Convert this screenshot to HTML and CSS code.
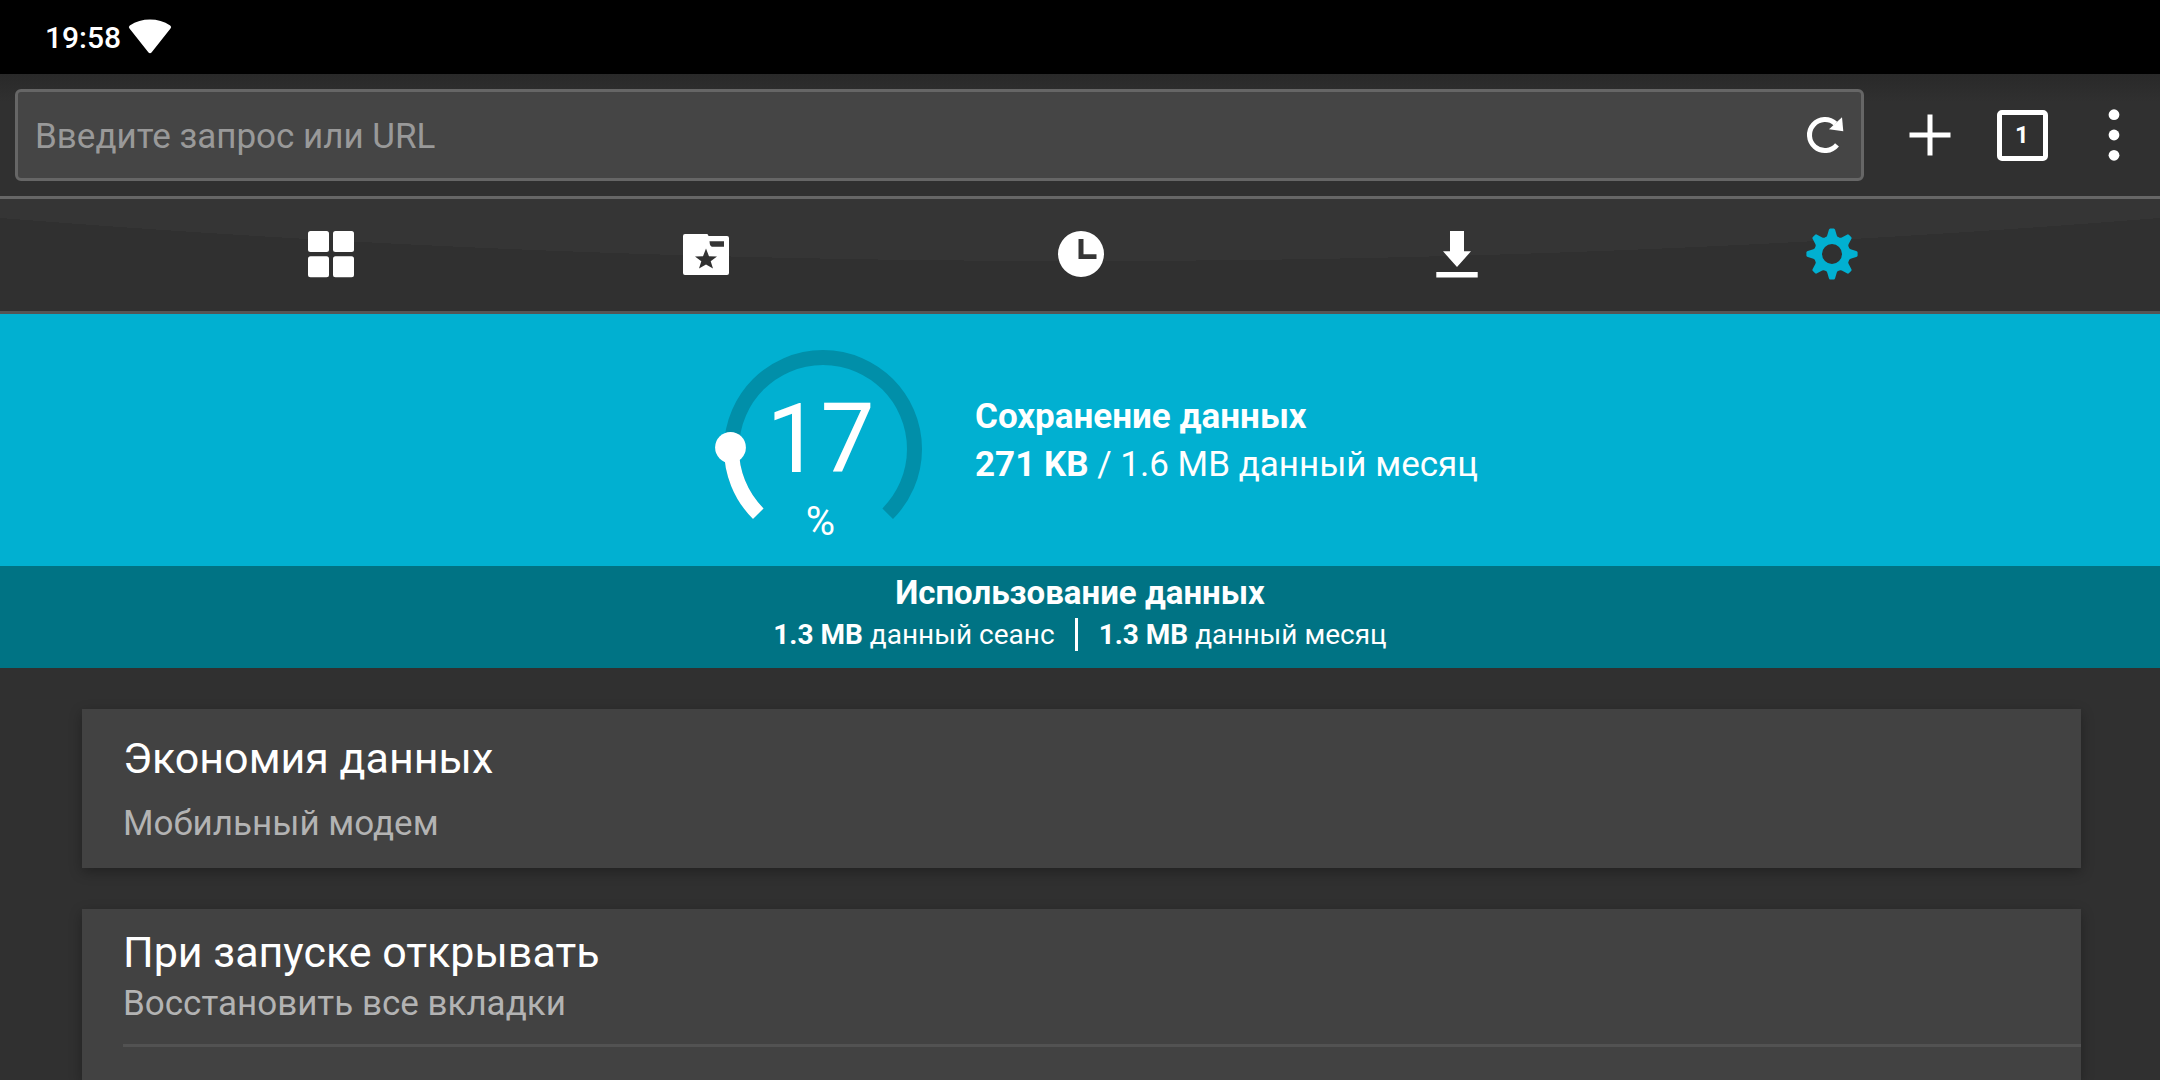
FILE: index.html
```
<!DOCTYPE html>
<html lang="ru">

<head>
    <meta charset="UTF-8">
    <title>Настройки</title>
    <link rel="stylesheet" href="styles.css">
</head>

<body>

    <div class="statusbar">
        <span>19:58</span>
        <svg width="44" height="36" viewBox="0 0 44 36" fill="#fff" aria-hidden="true">
            <path d="M1.5 9.5Q0 8 1.8 6.4Q11 0.500 22 0.500T42.200 6.400Q44 8 42.500 9.500L23.500 33.500Q22 35 20.500 33.500Z" />
        </svg>
    </div>

    <header class="toolbar">
        <form class="address">
            <input type="text" placeholder="Введите запрос или URL" aria-label="Введите запрос или URL">
            <button type="button" aria-label="Обновить">
                <svg width="44" height="44" viewBox="-22 -22 44 44" aria-hidden="true">
                    <path d="M10.500 -11.400A15.500 15.500 0 1 0 12 9.800" fill="none" stroke="#fff" stroke-width="5" />
                    <path d="M17 -17.700L18.300 -3.700L4 -5.700Z" fill="#fff" />
                </svg>
            </button>
        </form>
        <div class="actions">
            <button type="button" aria-label="Новая вкладка">
                <svg width="42" height="42" viewBox="-21 -21 42 42" aria-hidden="true">
                    <path d="M-20.500 0H20.500M0 -20.500V20.500" stroke="#fff" stroke-width="5" />
                </svg>
            </button>
            <button type="button" aria-label="Вкладки"><span class="tab-count">1</span></button>
            <button type="button" aria-label="Меню">
                <svg width="12" height="52" viewBox="-6 -26 12 52" fill="#fff" aria-hidden="true">
                    <circle cy="-20.300" r="5.400" />
                    <circle r="5.400" />
                    <circle cy="20.300" r="5.400" />
                </svg>
            </button>
        </div>
    </header>

    <nav class="tabs">
        <a href="#speed-dial" aria-label="Экспресс-панель">
            <svg width="56" height="56" viewBox="-28 -27 56 56" fill="currentColor" aria-hidden="true">
                <rect x="-23" y="-23" width="21" height="21" rx="2.500" />
                <rect x="2" y="-23" width="21" height="21" rx="2.500" />
                <rect x="-23" y="2.300" width="21" height="21" rx="2.500" />
                <rect x="2" y="2.300" width="21" height="21" rx="2.500" />
            </svg>
        </a>
        <a href="#bookmarks" aria-label="Закладки">
            <svg width="56" height="56" viewBox="-28 -27 56 56" fill="currentColor" aria-hidden="true">
                <path fill-rule="evenodd" d="M-21 -20H1Q2 -20 2.500 -18H21Q23 -18 23 -16V19Q23 21 21 21H-21Q-23 21 -23 19V-18Q-23 -20 -21 -20ZM3.500 -12.700Q3.800 -7.300 6 -7.300H18V-12.700ZM0 -5.500L-3 2.300L-11 2.600L-4.700 7.300L-7 14.600L0 10.500L7 14.600L4.700 7.300L11 2.600L3 2.300Z" />
            </svg>
        </a>
        <a href="#history" aria-label="История">
            <svg width="56" height="56" viewBox="-28 -27 56 56" fill="currentColor" aria-hidden="true">
                <path fill-rule="evenodd" d="M0 -23A23 23 0 1 1 0 23A23 23 0 1 1 0 -23ZM-2.500 -15V5H15.500V0.200H2.500V-15Z" />
            </svg>
        </a>
        <a href="#downloads" aria-label="Загрузки">
            <svg width="56" height="56" viewBox="-28 -27 56 56" fill="currentColor" aria-hidden="true">
                <path d="M-7 -23H7V-2.700H14L0 13L-14 -2.700H-7ZM-20.700 18H20.700V23.500H-20.700Z" />
            </svg>
        </a>
        <a class="active" href="#settings" aria-label="Настройки">
            <svg width="56" height="56" viewBox="-28 -27 56 56" fill="currentColor" aria-hidden="true">
                <defs>
                    <path id="tooth" d="M-1.800 -25.600H1.800Q2.800 -25.400 3.100 -24.200L4.800 -18.600Q5.500 -16.800 7.200 -16.600L4.300 -10.400H-4.300L-7.200 -16.600Q-5.500 -16.800 -4.800 -18.600L-3.100 -24.200Q-2.800 -25.400 -1.800 -25.600Z" />
                </defs>
                <circle r="13.700" fill="none" stroke="currentColor" stroke-width="7.400" />
                <use href="#tooth" />
                <use href="#tooth" transform="rotate(45)" />
                <use href="#tooth" transform="rotate(90)" />
                <use href="#tooth" transform="rotate(135)" />
                <use href="#tooth" transform="rotate(180)" />
                <use href="#tooth" transform="rotate(225)" />
                <use href="#tooth" transform="rotate(270)" />
                <use href="#tooth" transform="rotate(315)" />
            </svg>
        </a>
    </nav>

    <section class="savings">
        <div class="gauge">
            <svg width="216" height="200" viewBox="-108 -109 216 200" fill="none" stroke-width="15" aria-hidden="true">
                <path d="M-64.700 64.700A91.500 91.500 0 1 1 64.700 64.700" stroke="#018fa9" />
                <path d="M-64.700 64.700A91.500 91.500 0 0 1 -91.500 -2" stroke="#fff" />
                <circle cx="-92.500" cy="-1.500" r="15.400" fill="#fff" />
            </svg>
            <div class="gauge-label">
                <span class="gauge-value">17</span>
                <span class="gauge-unit">%</span>
            </div>
        </div>
        <div class="savings-text">
            <strong>Сохранение данных</strong>
            <div><strong>271 KB</strong> / 1.6 MB данный месяц</div>
        </div>
    </section>

    <section class="usage">
        <strong class="usage-title">Использование данных</strong>
        <div class="usage-row">
            <span><strong>1.3 MB</strong> данный сеанс</span>
            <span><strong>1.3 MB</strong> данный месяц</span>
        </div>
    </section>

    <main>
        <a class="card card-single" href="#data-saving">
            <span class="title">Экономия данных</span>
            <span class="subtitle">Мобильный модем</span>
        </a>
        <div class="card card-list">
            <a class="row" href="#startup">
                <span class="title">При запуске открывать</span>
                <span class="subtitle">Восстановить все вкладки</span>
            </a>
        </div>
    </main>

</body>

</html>
```
FILE: styles.css
```
* {
    box-sizing: border-box;
}

body {
    margin: 0;
    min-height: 100vh;
    display: flex;
    flex-direction: column;
    background-color: #303030;
    color: #fff;
    font-family: Roboto, "Noto Sans", sans-serif;
}

a {
    color: inherit;
    text-decoration: none;
}

button {
    display: flex;
    align-items: center;
    justify-content: center;
    padding: 0;
    border: none;
    background: none;
    color: inherit;
    font-family: inherit;
}

strong {
    font-weight: bold;
}

.statusbar {
    display: flex;
    align-items: center;
    gap: 7px;
    height: 74px;
    padding-left: 45px;
    background-color: #000;
    font-size: 30px;
    font-weight: 500;
}

/* Toolbar */
.toolbar {
    display: flex;
    gap: 20px;
    padding: 15px 0 15px 15px;
    border-bottom: 3px solid #666;
    background: linear-gradient(#292929, #303030 28px);
}

.address {
    flex: 1;
    display: flex;
    height: 92px;
    border: 3px solid #666;
    border-radius: 6px;
    background-color: #454545;
}

.address input {
    flex: 1;
    padding: 2px 17px 0;
    border: none;
    outline: none;
    background: none;
    color: #fff;
    font-family: inherit;
    font-size: 35px;
}

.address input::placeholder {
    color: #999;
}

.address button {
    width: 72px;
}

.actions {
    display: flex;
}

.actions button {
    width: 92px;
}

.tab-count {
    width: 51px;
    height: 51px;
    border: 5px solid #fff;
    border-radius: 5px;
    font-size: 24px;
    font-weight: bold;
    line-height: 41px;
}

/* Tabs */
.tabs {
    display: grid;
    grid-template-columns: repeat(5, 1fr);
    padding: 0 140px 0 143px;
    border-bottom: 3px solid #555;
    background: radial-gradient(circle 13560px at 50% -13498px, #353535 100%, #303030 100%);
}

.tabs a {
    display: flex;
    justify-content: center;
    padding: 28px 0;
}

.tabs .active {
    color: #01b0d1;
}

/* Data savings */
.savings {
    display: grid;
    grid-template-columns: 45% 1fr;
    align-items: center;
    padding: 26px 0;
    background-color: #01b0d1;
}

.gauge {
    display: grid;
    justify-self: end;
    margin-right: 41px;
}

.gauge svg,
.gauge-label {
    grid-area: 1 / 1;
}

.gauge-label {
    display: flex;
    flex-direction: column;
    align-items: center;
    padding: 51px 5px 0 0;
}

.gauge-value {
    font-size: 96px;
    line-height: 96px;
}

.gauge-unit {
    margin-bottom: -17px;
    font-size: 40px;
    line-height: 70px;
}

.savings-text {
    padding: 2px 0 0 3px;
    font-size: 35px;
    line-height: 48px;
}

.usage {
    display: flex;
    flex-direction: column;
    align-items: center;
    padding: 6px 0 13px;
    background-color: #007384;
}

.usage-title {
    font-size: 33px;
    line-height: 42px;
}

.usage-row {
    display: flex;
    padding-top: 1px;
    font-size: 28px;
    line-height: 40px;
}

.usage-row span + span {
    position: relative;
    padding-left: 44px;
}

.usage-row span + span::before {
    content: "";
    position: absolute;
    top: 3px;
    left: 20px;
    width: 3px;
    height: 33px;
    background-color: #fff;
}

/* Settings */
main {
    flex: 1;
    display: flex;
    flex-direction: column;
    gap: 41px;
    padding: 41px 79px 0 82px;
}

.card {
    padding-left: 41px;
    background-color: #424242;
    box-shadow: 0 4px 12px rgba(0, 0, 0, 0.3);
}

.title,
.subtitle {
    display: block;
}

.title {
    font-size: 43px;
    line-height: 50px;
}

.subtitle {
    color: #b3b3b3;
    font-size: 35px;
    line-height: 50px;
}

.card-single {
    display: grid;
    gap: 16px;
    padding-top: 24px;
    padding-bottom: 19px;
}

.card-list {
    flex: 1;
}

.row {
    display: grid;
    gap: 2px;
    padding: 18px 0 15px;
    border-bottom: 3px solid #525252;
}
```
